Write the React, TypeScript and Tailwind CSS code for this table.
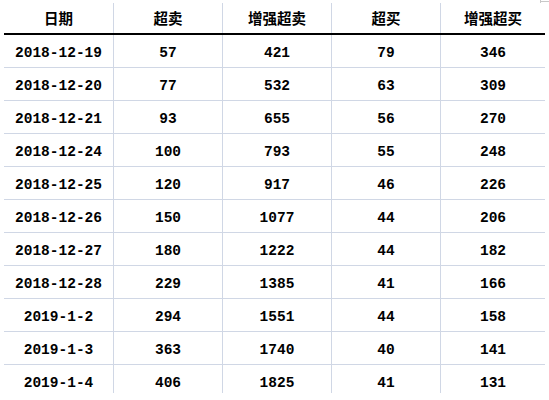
import React from "react";

const rows: [string, number, number, number, number][] = [
  ["2018-12-19", 57, 421, 79, 346],
  ["2018-12-20", 77, 532, 63, 309],
  ["2018-12-21", 93, 655, 56, 270],
  ["2018-12-24", 100, 793, 55, 248],
  ["2018-12-25", 120, 917, 46, 226],
  ["2018-12-26", 150, 1077, 44, 206],
  ["2018-12-27", 180, 1222, 44, 182],
  ["2018-12-28", 229, 1385, 41, 166],
  ["2019-1-2", 294, 1551, 44, 158],
  ["2019-1-3", 363, 1740, 40, 141],
  ["2019-1-4", 406, 1825, 41, 131],
];

const headers = ["日期", "超卖", "增强超卖", "超买", "增强超买"];
const widths = ["w-[110px]", "w-[109px]", "w-[109px]", "w-[109px]", "w-[104px]"];

export default function App() {
  return (
    <div className="relative w-[549px] h-[400px] bg-white overflow-hidden">
      <div className="absolute right-0 top-[1px] w-[9px] h-[1px] bg-[#c8c8c8]" />
      <div className="absolute right-[8px] top-0 w-[1px] h-[3px] bg-[#c8c8c8]" />
      <div className="pl-[4px] pt-[3px]">
        <div className="flex w-[541px] border-b-2 border-black">
          {headers.map((h, i) => (
            <div
              key={h}
              className={`${widths[i]} h-[30px] flex justify-center pt-[4px] text-[14.5px] leading-[22px] font-bold text-black ${i < 4 ? "border-r border-[#d0d7e5]" : ""}`}
              style={{ fontFamily: '"Noto Sans CJK SC", sans-serif' }}
            >
              {h}
            </div>
          ))}
        </div>
        {rows.map((r, ri) => (
          <div
            key={r[0]}
            className={`flex w-[541px] ${ri < rows.length - 1 ? "border-b border-[#d0d7e5]" : ""}`}
          >
            {r.map((v, i) => (
              <div
                key={i}
                className={`${widths[i]} ${ri < rows.length - 1 ? "h-[32px]" : "h-[28px]"} flex justify-center pt-[8px] text-[14.5px] leading-[20px] font-bold text-black ${i < 4 ? "border-r border-[#d0d7e5]" : ""}`}
                style={{ fontFamily: '"Liberation Mono", monospace' }}
              >
                {v}
              </div>
            ))}
          </div>
        ))}
      </div>
    </div>
  );
}
